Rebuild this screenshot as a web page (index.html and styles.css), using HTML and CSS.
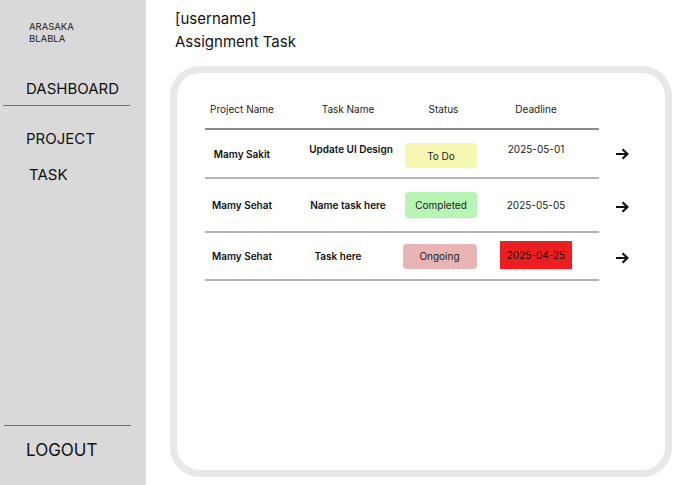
FILE: index.html
```html
<!DOCTYPE html>
<html lang="en">
<head>
<meta charset="utf-8">
<title>Assignment Task</title>
<link rel="stylesheet" href="styles.css">
</head>
<body>
<div class="app">
  <aside class="sidebar">
    <div class="brand">ARASAKA<br>BLABLA</div>
    <div class="nav-item nav-dashboard">DASHBOARD</div>
    <div class="rule rule-top"></div>
    <div class="nav-item nav-project">PROJECT</div>
    <div class="nav-item nav-task">TASK</div>
    <div class="spacer"></div>
    <div class="rule rule-bottom"></div>
    <div class="logout">LOGOUT</div>
  </aside>
  <main class="main">
    <div class="heading">
      <div class="username">[username]</div>
      <div class="page-title">Assignment Task</div>
    </div>
    <section class="card">
      <div class="row-wrap">
        <div class="trow thead">
          <div class="cell c-proj">Project Name</div>
          <div class="cell">Task Name</div>
          <div class="cell c-status">Status</div>
          <div class="cell">Deadline</div>
        </div>
      </div>
      <div class="row-wrap">
        <div class="trow r1">
          <div class="cell c-proj strong">Mamy Sakit</div>
          <div class="cell strong lift shift-right">Update UI Design</div>
          <div class="cell"><span class="badge todo">To Do</span></div>
          <div class="cell lift">2025-05-01</div>
        </div>
        <div class="arrow arrow-up"><svg width="14" height="12" viewBox="0 0 14 12"><path d="M1 6 H12.5 M7.5 1.2 L12.5 6 L7.5 10.8" fill="none" stroke="#111" stroke-width="2.2"/></svg></div>
      </div>
      <div class="row-wrap">
        <div class="trow r2">
          <div class="cell c-proj strong">Mamy Sehat</div>
          <div class="cell strong">Name task here</div>
          <div class="cell"><span class="badge done">Completed</span></div>
          <div class="cell">2025-05-05</div>
        </div>
        <div class="arrow"><svg width="14" height="12" viewBox="0 0 14 12"><path d="M1 6 H12.5 M7.5 1.2 L12.5 6 L7.5 10.8" fill="none" stroke="#111" stroke-width="2.2"/></svg></div>
      </div>
      <div class="row-wrap">
        <div class="trow r3">
          <div class="cell c-proj strong">Mamy Sehat</div>
          <div class="cell strong shift-left">Task here</div>
          <div class="cell"><span class="badge ongoing">Ongoing</span></div>
          <div class="cell"><span class="overdue">2025-04-25</span></div>
        </div>
        <div class="arrow"><svg width="14" height="12" viewBox="0 0 14 12"><path d="M1 6 H12.5 M7.5 1.2 L12.5 6 L7.5 10.8" fill="none" stroke="#111" stroke-width="2.2"/></svg></div>
      </div>
    </section>
  </main>
</div>
</body>
</html>
```

FILE: styles.css
```css
* { box-sizing: border-box; }
html, body { margin: 0; padding: 0; }
body {
  font-family: Inter, "Noto Sans", sans-serif;
  color: #111;
  background: #fff;
  width: 678px;
  height: 485px;
  overflow: hidden;
}
.app {
  display: flex;
  height: 485px;
}
.sidebar {
  width: 146px;
  flex: none;
  background: #d9d9d9;
  display: flex;
  flex-direction: column;
}
.brand {
  font-size: 9.5px;
  line-height: 12px;
  color: #222;
  padding: 21px 0 0 29px;
}
.nav-item {
  font-size: 15px;
  line-height: 18px;
  color: #111;
  padding-left: 26px;
}
.nav-dashboard { margin-top: 35px; }
.rule {
  height: 1px;
  background: #707070;
  width: 127px;
}
.rule-top { margin: 7px 0 0 3px; }
.nav-project { margin-top: 24px; }
.nav-task { margin-top: 18px; padding-left: 29px; }
.spacer { flex: 1; }
.rule-bottom { margin-left: 4px; }
.logout {
  font-size: 17px;
  line-height: 20px;
  padding-left: 26px;
  margin: 14px 0 25px;
}
.main {
  flex: 1;
  padding: 8px 6px 8px 24px;
  display: flex;
  flex-direction: column;
}
.heading {
  padding-left: 5px;
  font-size: 15px;
  line-height: 22px;
  color: #111;
}
.page-title { margin-top: 1px; }
.card {
  margin-top: 13px;
  width: 502px;
  height: 411px;
  border: 7px solid #e8e8e8;
  border-radius: 30px;
  background: #fff;
  padding: 16px 0 0 28px;
  display: flex;
  flex-direction: column;
}
.row-wrap {
  display: flex;
  align-items: center;
}
.trow {
  width: 394px;
  display: grid;
  grid-template-columns: 95px 96px 90px 100px;
  align-items: center;
  border-bottom: 2px solid #b4b4b4;
  font-size: 10px;
  color: #1a1a1a;
}
.thead { height: 41px; border-bottom-color: #8c8c8c; color: #222; }
.r1 { height: 49px; }
.r2 { height: 54px; }
.r3 { height: 48px; }
.cell {
  display: flex;
  justify-content: center;
  align-items: center;
  text-align: center;
  white-space: nowrap;
}
.c-proj { padding-right: 21px; }
.c-status { padding-left: 5px; }
.strong { font-weight: 600; color: #111; }
.lift { margin-bottom: 10px; }
.shift-right { padding-left: 6px; }
.shift-left { padding-right: 20px; }
.badge {
  display: flex;
  align-items: center;
  justify-content: center;
  width: 72px;
  height: 25px;
  border-radius: 4px;
  color: #222;
}
.todo { background: #f6f7b3; margin-top: 4px; }
.done { background: #b7f5b4; height: 26px; }
.ongoing { background: #e8b4b4; width: 74px; margin-right: 3px; }
.overdue {
  display: flex;
  align-items: center;
  justify-content: center;
  width: 72px;
  height: 28px;
  background: #eb1f21;
  color: #2a0a0a;
  margin-bottom: 3px;
}
.arrow {
  margin-left: 16px;
  display: flex;
  padding-top: 2px;
}
.arrow-up { padding-top: 0; margin-bottom: 2px; }
.arrow svg { display: block; }
```
